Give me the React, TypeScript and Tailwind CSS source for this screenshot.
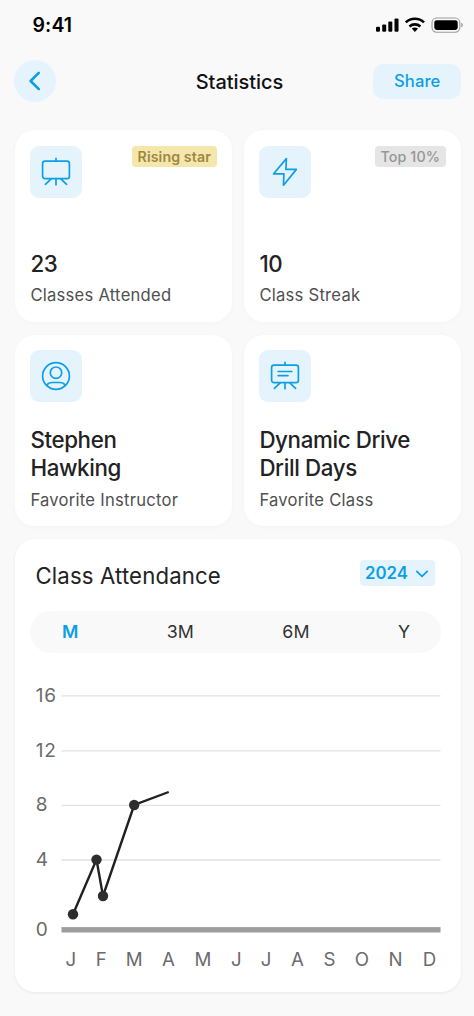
import type { ReactNode } from "react";

const gridLines = [
  { label: "16", y: 45.8 },
  { label: "12", y: 100.8 },
  { label: "8", y: 155.3 },
  { label: "4", y: 210 },
];

const months: [string, number][] = [
  ["J", 55.8], ["F", 86.3], ["M", 119.2], ["A", 153.5], ["M", 188], ["J", 221.3],
  ["J", 251], ["A", 282.5], ["S", 314.5], ["O", 347], ["N", 380.5], ["D", 414.5],
];

const points: [number, number][] = [[58, 264.3], [81.5, 209.6], [88, 246], [119.2, 155]];

function Easel({ lines = false }: { lines?: boolean }) {
  return (
    <svg width="32" height="32" viewBox="0 0 32 32" fill="none" stroke="#0d9fe5" strokeWidth="1.7" strokeLinecap="round" strokeLinejoin="round">
      <rect x="2.6" y="5.2" width="26.8" height="17.4" rx="2.4" />
      <path d="M16 2.4v2.8M16 22.6v6.2M11.2 22.8l-5.8 5.6M20.8 22.8l5.8 5.6" />
      {lines && <path d="M9.2 11.5h13.6M9.2 15.6h9.8" />}
    </svg>
  );
}

function Bolt() {
  return (
    <svg width="32" height="32" viewBox="0 0 32 32" fill="none" stroke="#0d9fe5" strokeWidth="1.7" strokeLinejoin="round">
      <path d="M17.4 2.6 4.6 17.8h10.3l-.4 11.4 12.9-15.8H16.9z" />
    </svg>
  );
}

function Person() {
  return (
    <svg width="32" height="32" viewBox="0 0 32 32" fill="none" stroke="#0d9fe5" strokeWidth="1.7" strokeLinecap="round">
      <circle cx="16" cy="16" r="13.4" />
      <circle cx="16" cy="12.7" r="5.7" />
      <path d="M6.7 25.4c1.2-2 3-2.9 5.6-2.9h7.4c2.6 0 4.4.9 5.6 2.9" />
    </svg>
  );
}

interface StatCardProps {
  icon: ReactNode;
  title: ReactNode;
  label: string;
  badge?: ReactNode;
}

function StatCard({ icon, title, label, badge }: StatCardProps) {
  return (
    <section className="flex h-[191.5px] flex-col justify-between rounded-[20px] bg-white pt-[15.5px] pr-[15.5px] pb-[16.5px] pl-[15.4px] shadow-[0_1px_6px_rgba(0,0,0,0.025)]">
      <div className="flex items-start justify-between">
        <div className="flex size-[52px] items-center justify-center rounded-[9px] bg-[#e5f4fc]">{icon}</div>
        {badge}
      </div>
      <div>
        <h2 className="text-[22.3px] leading-[28.5px] font-medium tracking-[-0.36px] text-[#222]">{title}</h2>
        <p className="mt-[7px] text-[16.6px] leading-5 tracking-[0.25px] whitespace-nowrap text-[#505050]">{label}</p>
      </div>
    </section>
  );
}

function StatusBar() {
  return (
    <div className="flex h-[49px] items-center justify-between pr-[11px] pl-[32.5px]">
      <span className="pt-[2px] text-[19.5px] font-semibold tracking-[0.1px] text-black">9:41</span>
      <svg width="88" height="18" viewBox="0 0 88 18">
        <rect x="1" y="10.8" width="4" height="4.9" rx="1.2" />
        <rect x="7.2" y="8.4" width="4" height="7.3" rx="1.2" />
        <rect x="13.3" y="5.4" width="4" height="10.3" rx="1.2" />
        <rect x="19.5" y="2.4" width="4" height="13.3" rx="1.2" />
        <g fill="none" stroke="black" strokeWidth="2.6">
          <path d="M30.8 6.4a13.3 13.3 0 0 1 18.2 0" />
          <path d="M34.4 10.4a8.4 8.4 0 0 1 11 0" />
        </g>
        <path d="M36.8 12.6a5 5 0 0 1 6.2 0l-3.1 3.3z" />
        <rect x="57" y="2" width="27.8" height="14.2" rx="4.6" fill="none" stroke="#9b9b9b" strokeWidth="1.1" />
        <rect x="59.3" y="4.2" width="23.4" height="9.8" rx="2.4" />
        <path d="M86.2 6.6v5c1-.4 1.7-1.4 1.7-2.5s-.7-2.1-1.7-2.5z" fill="#a5a5a5" />
      </svg>
    </div>
  );
}

function AttendanceChart() {
  return (
    <svg className="block" width="446" height="330" viewBox="0 0 446 330" fontSize="19" fill="#6b6b6b">
      {gridLines.map(({ label, y }) => (
        <g key={label}>
          <text x="20.8" y={y + 6} letterSpacing="0.7">{label}</text>
          <path d={`M46.5 ${y}H425.5`} stroke="#e2e2e2" strokeWidth="1.3" />
        </g>
      ))}
      <text x="20.8" y="286.4">0</text>
      <rect x="46.5" y="277.1" width="379" height="5.4" fill="#9d9d9d" />
      <path d="M58 264.3 81.5 209.6 88 246 119.2 155 153.7 142" fill="none" stroke="#212121" strokeWidth="2.4" />
      {points.map(([x, y]) => (
        <circle key={x} cx={x} cy={y} r="5.2" fill="#2d2d2d" />
      ))}
      {months.map(([m, x], i) => (
        <text key={i} x={x} y="316.4" fontSize="18.7" textAnchor="middle">{m}</text>
      ))}
    </svg>
  );
}

export default function App() {
  return (
    <main className="h-[1016px] w-[474px] overflow-hidden bg-[#f9f9f9] font-['Inter',sans-serif]">
      <StatusBar />
      <header className="mt-[11px] flex h-[42px] items-center justify-between pr-[12.5px] pl-[14px]">
        <button aria-label="Back" className="flex size-[42px] items-center justify-center rounded-full bg-[#e5f4fc]">
          <svg width="18" height="22" viewBox="0 0 18 22" fill="none" stroke="#0d9fe5" strokeWidth="2.6" strokeLinecap="round" strokeLinejoin="round">
            <path d="M12.8 2.8 4.6 11l8.2 8.2" />
          </svg>
        </button>
        <h1 className="ml-[50px] pt-px text-[20px] font-medium tracking-[-0.03px] text-[#111]">Statistics</h1>
        <button className="flex h-[35px] w-[88.5px] items-center justify-center rounded-[10px] bg-[#e5f4fc] text-[16.6px] font-medium tracking-[0.1px] text-[#0d9fe5]">Share</button>
      </header>
      <div className="mt-7 grid grid-cols-2 gap-x-3 gap-y-[13px] pr-[13px] pl-[15px]">
        <StatCard
          icon={<Easel />}
          title="23"
          label="Classes Attended"
          badge={<span className="flex h-[21px] w-[84.5px] items-center justify-center rounded bg-[#f5e7ab] pt-px text-[14.2px] font-semibold tracking-[0.1px] text-[#9d8742]">Rising star</span>}
        />
        <StatCard
          icon={<Bolt />}
          title="10"
          label="Class Streak"
          badge={<span className="flex h-[21px] w-[70.5px] items-center justify-center rounded bg-[#e5e5e5] pt-px text-[14.3px] font-medium tracking-[0.1px] text-[#969696]">Top 10%</span>}
        />
        <StatCard icon={<Person />} title={<>Stephen<br />Hawking</>} label="Favorite Instructor" />
        <StatCard icon={<Easel lines />} title={<>Dynamic Drive<br />Drill Days</>} label="Favorite Class" />
      </div>
      <section className="mt-[13px] mr-[13px] ml-[15px] h-[453px] rounded-[20px] bg-white shadow-[0_1px_3px_rgba(0,0,0,0.07)]">
        <div className="flex h-[72px] items-start justify-between pt-[21px] pr-[26px] pl-[20.5px]">
          <h2 className="text-[22.2px] leading-8 tracking-[0.14px] text-[#222]">Class Attendance</h2>
          <button className="flex h-[26px] w-[75.5px] items-center justify-between rounded bg-[#e5f4fc] pt-px pr-[6px] pl-[5.5px] text-[16.8px] font-semibold text-[#0d9fe5]">
            2024
            <svg width="14" height="10" viewBox="0 0 14 10" fill="none" stroke="currentColor" strokeWidth="1.8" strokeLinecap="round" strokeLinejoin="round">
              <path d="m1.8 2.4 5.2 5 5.2-5" />
            </svg>
          </button>
        </div>
        <div className="mr-[20.5px] ml-[15px] flex h-[42px] items-center justify-between rounded-full bg-[#f9f9f9] pr-[30.5px] pl-8 text-[17.8px] text-[#333]">
          <span className="font-semibold text-[#0d9fe5]">M</span>
          <span>3M</span>
          <span>6M</span>
          <span>Y</span>
        </div>
        <div className="-mt-[3px]">
          <AttendanceChart />
        </div>
      </section>
    </main>
  );
}
